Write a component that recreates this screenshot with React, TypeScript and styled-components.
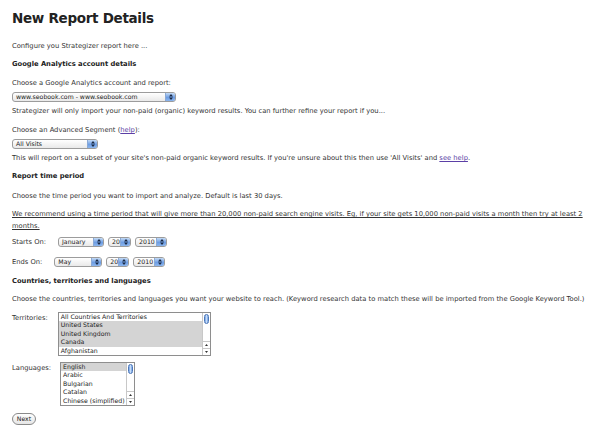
import React from 'react';
import styled, { createGlobalStyle } from 'styled-components';

const Global = createGlobalStyle`
  html, body { margin: 0; padding: 0; background: #fff; }
  body { font-family: "DejaVu Sans", Verdana, sans-serif; color: #333; }
`;

const Page = styled.div`
  display: flex;
  flex-direction: column;
  align-items: flex-start;
  width: 595px;
  box-sizing: border-box;
  padding: 8px 4px 0 12px;
  font-size: 6.75px;
  line-height: 12px;
`;

const Title = styled.h1`
  margin: 0;
  font-size: 13.5px;
  line-height: 20px;
  font-weight: bold;
  color: #222;
  letter-spacing: -0.3px;
`;

const Text = styled.p<{ $mt: number; $underline?: boolean }>`
  margin: ${(p) => p.$mt}px 0 0;
  text-decoration: ${(p) => (p.$underline ? 'underline' : 'none')};
`;

const Heading = styled.h2<{ $mt: number }>`
  margin: ${(p) => p.$mt}px 0 0;
  font-size: 6.75px;
  line-height: 12px;
  font-weight: bold;
  color: #222;
`;

const Link = styled.a`
  color: #5b3fa6;
  text-decoration: underline;
`;

const PopUp = styled.div<{ $w: number; $mt?: number }>`
  display: flex;
  align-items: stretch;
  width: ${(p) => p.$w}px;
  height: 10px;
  margin-top: ${(p) => p.$mt ?? 0}px;
  box-sizing: border-box;
  border: 1px solid #9c9c9c;
  border-radius: 3px;
  background: linear-gradient(#ffffff, #e9e9e9);
  font-size: 6.2px;
  line-height: 8px;
  color: #222;
  overflow: hidden;
`;

const PopLabel = styled.span`
  flex: 1;
  padding-left: 3px;
  white-space: nowrap;
  overflow: hidden;
`;

const PopArrows = styled.span`
  width: 9px;
  flex: none;
  display: flex;
  align-items: center;
  justify-content: center;
  border-left: 1px solid #8aa9d6;
  background: linear-gradient(#c4dbf6, #6d9de3 55%, #8cb6ee);
`;

const Arrows = () => (
  <svg width="4" height="6" viewBox="0 0 4 6">
    <path d="M0 2.5 L2 0 L4 2.5 Z M0 3.5 L2 6 L4 3.5 Z" fill="#1b2a44" />
  </svg>
);

const Select = ({ w, mt, children }: { w: number; mt?: number; children: React.ReactNode }) => (
  <PopUp $w={w} $mt={mt}>
    <PopLabel>{children}</PopLabel>
    <PopArrows>
      <Arrows />
    </PopArrows>
  </PopUp>
);

const FieldRow = styled.div<{ $mt: number; $gap: number; $top?: boolean }>`
  display: flex;
  align-items: ${(p) => (p.$top ? 'flex-start' : 'center')};
  margin-top: ${(p) => p.$mt}px;
  gap: ${(p) => p.$gap}px;
`;

const FieldLabel = styled.label`
  line-height: 12px;
`;

const DateGroup = styled.div`
  display: flex;
  gap: 4px;
`;

const ListBox = styled.div<{ $w: number }>`
  display: flex;
  width: ${(p) => p.$w}px;
  height: 44px;
  box-sizing: border-box;
  border: 1px solid #8e8e8e;
  background: #fff;
  font-size: 6.2px;
  line-height: 8.4px;
  color: #222;
  overflow: hidden;
`;

const Options = styled.div`
  flex: 1;
  min-width: 0;
  overflow: hidden;
  display: flex;
  flex-direction: column;
`;

const Option = styled.div<{ $selected?: boolean }>`
  padding-left: 2px;
  white-space: nowrap;
  background: ${(p) => (p.$selected ? '#d4d4d4' : 'transparent')};
`;

const Scroll = styled.div`
  width: 7px;
  flex: none;
  display: flex;
  flex-direction: column;
  border-left: 1px solid #c8c8c8;
  background: #fff;
`;

const Thumb = styled.div`
  margin: 1px 1px 0;
  height: 10px;
  border-radius: 3px;
  border: 1px solid #4d77b8;
  background: linear-gradient(90deg, #6f9fe3, #c8ddf7 50%, #6f9fe3);
  box-sizing: border-box;
`;

const Track = styled.div`
  flex: 1;
`;

const ScrollBtn = styled.div`
  height: 6px;
  display: flex;
  align-items: center;
  justify-content: center;
  border-top: 1px solid #c8c8c8;
`;

const Tri = ({ up }: { up?: boolean }) => (
  <svg width="3" height="2" viewBox="0 0 3 2">
    <path d={up ? 'M0 2 L1.5 0 L3 2 Z' : 'M0 0 L1.5 2 L3 0 Z'} fill="#333" />
  </svg>
);

const List = ({ w, items }: { w: number; items: { label: string; sel?: boolean }[] }) => (
  <ListBox $w={w}>
    <Options>
      {items.map((it) => (
        <Option key={it.label} $selected={it.sel}>
          {it.label}
        </Option>
      ))}
    </Options>
    <Scroll>
      <Thumb />
      <Track />
      <ScrollBtn>
        <Tri up />
      </ScrollBtn>
      <ScrollBtn>
        <Tri />
      </ScrollBtn>
    </Scroll>
  </ListBox>
);

const NextButton = styled.button`
  margin-top: 7px;
  width: 24px;
  height: 12px;
  padding: 0;
  border: 1px solid #8a8a8a;
  border-radius: 6px;
  background: linear-gradient(#ffffff, #e6e6e6);
  font-family: "DejaVu Sans", Verdana, sans-serif;
  font-size: 6.2px;
  line-height: 10px;
  color: #222;
`;

export default function App() {
  return (
    <>
      <Global />
      <Page>
        <Title>New Report Details</Title>
        <Text $mt={12}>Configure you Strategizer report here ...</Text>
        <Heading $mt={6}>Google Analytics account details</Heading>
        <Text $mt={7}>Choose a Google Analytics account and report:</Text>
        <Select w={164} mt={3}>www.seobook.com - www.seobook.com</Select>
        <Text $mt={3}>
          Strategizer will only import your non-paid (organic) keyword results. You can further refine your report if you...
        </Text>
        <Text $mt={7}>
          Choose an Advanced Segment (<Link href="#">help</Link>):
        </Text>
        <Select w={86} mt={3}>All Visits</Select>
        <Text $mt={3}>
          This will report on a subset of your site's non-paid organic keyword results. If you're unsure about this then use 'All Visits' and{' '}
          <Link href="#">see help</Link>.
        </Text>
        <Heading $mt={6}>Report time period</Heading>
        <Text $mt={8}>Choose the time period you want to import and analyze. Default is last 30 days.</Text>
        <Text $mt={6} $underline>
          We recommend using a time period that will give more than 20,000 non-paid search engine visits. Eg, if your site gets 10,000 non-paid visits a month then try at least 2 months.
        </Text>
        <FieldRow $mt={4} $gap={12}>
          <FieldLabel>Starts On:</FieldLabel>
          <DateGroup>
            <Select w={46}>January</Select>
            <Select w={23}>20</Select>
            <Select w={32}>2010</Select>
          </DateGroup>
        </FieldRow>
        <FieldRow $mt={8} $gap={12}>
          <FieldLabel>Ends On:</FieldLabel>
          <DateGroup>
            <Select w={48}>May</Select>
            <Select w={23}>20</Select>
            <Select w={32}>2010</Select>
          </DateGroup>
        </FieldRow>
        <Heading $mt={7}>Countries, territories and languages</Heading>
        <Text $mt={6}>
          Choose the countries, territories and languages you want your website to reach. (Keyword research data to match these will be imported from the Google Keyword Tool.)
        </Text>
        <FieldRow $mt={7} $gap={10} $top>
          <FieldLabel>Territories:</FieldLabel>
          <List
            w={153}
            items={[
              { label: 'All Countries And Territories' },
              { label: 'United States', sel: true },
              { label: 'United Kingdom', sel: true },
              { label: 'Canada', sel: true },
              { label: 'Afghanistan' },
            ]}
          />
        </FieldRow>
        <FieldRow $mt={6} $gap={9} $top>
          <FieldLabel>Languages:</FieldLabel>
          <List
            w={75}
            items={[
              { label: 'English', sel: true },
              { label: 'Arabic' },
              { label: 'Bulgarian' },
              { label: 'Catalan' },
              { label: 'Chinese (simplified)' },
            ]}
          />
        </FieldRow>
        <NextButton>Next</NextButton>
      </Page>
    </>
  );
}
